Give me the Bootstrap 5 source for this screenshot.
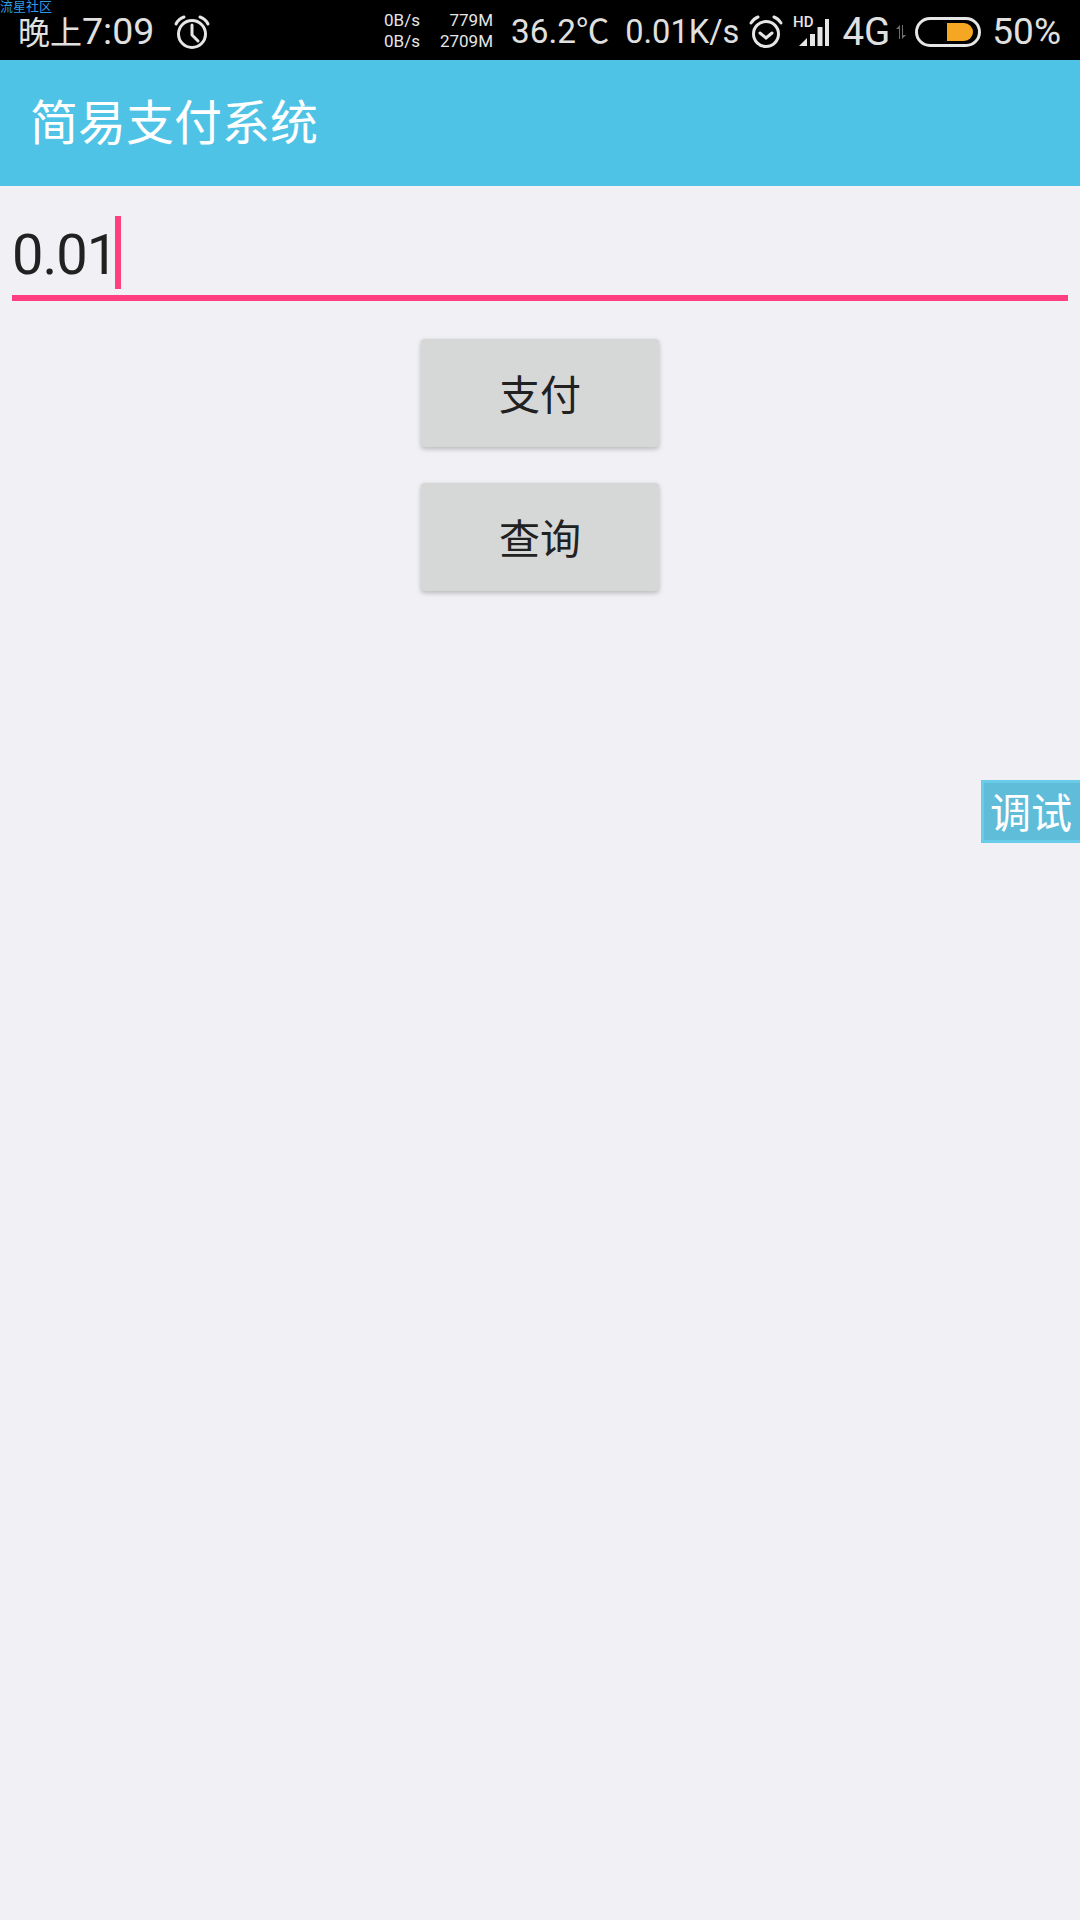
<!DOCTYPE html>
<html lang="zh">
<head>
<meta charset="utf-8">
<title>简易支付系统</title>
<link href="https://cdn.jsdelivr.net/npm/bootstrap@5.3.0/dist/css/bootstrap.min.css" rel="stylesheet">
<style>
html,body{height:1920px;width:1080px;overflow:hidden}
body{background:#f0f0f5;font-family:Roboto,"Noto Sans CJK SC",sans-serif;position:relative}
.sbar{height:60px;background:#000;color:#e0e0e0;padding:3px 19px 0 18px;position:relative}
.wm{position:absolute;left:0;top:0;font-size:13px;line-height:13px;color:#2f9be8}
.stime{margin-right:19px;font-size:37.500px;line-height:36px;display:flex;align-items:baseline}
.stime b{font-size:32px;font-weight:400}
.net{font-size:17px;line-height:21px;color:#e6e6e6;display:grid;grid-template-columns:auto 73px;text-align:right;margin-right:18px;margin-top:-1px}
.stxt{font-size:34px;line-height:40px}
.s-temp{font-size:33.300px;margin-right:16px}
.s-speed{font-size:32.600px;margin-right:10px}
.s-alarm{margin-right:10px}
.s-four{font-size:38.500px;margin-left:13px}
.s-arrows{margin-left:5px;margin-right:8px}
.s-pct{font-size:37px;margin-left:11px}
.tbar{height:126px;background:#4fc3e6;color:#fff;font-size:48px;line-height:128px;padding-left:30px}
.amount{margin:30px 12px 0;height:85px;border-bottom:6px solid #ff3f80;position:relative;font-size:56px;line-height:66px;color:#212121;padding-top:6px;letter-spacing:-1px}
.caret-bar{display:inline-block;width:6px;height:73px;background:#ff3f80;position:absolute;left:103px;top:0}
.pay-stack{margin-top:38px;gap:36px}
.pay{width:238px;height:108px;background:#d6d7d7;color:#212121;font-size:41px;border:0;border-radius:4px;box-shadow:0 2px 5px rgba(0,0,0,.24);display:flex;align-items:center;justify-content:center;padding:8px 0 0}
.pay:hover{background:#d6d7d7;color:#212121}
.debug{position:absolute;right:0;top:780px;width:99px;height:63px;background:#5fbdd9;border:3px solid #69cdea;border-right:0;color:#fff;font-size:41px;line-height:62px;padding-left:6px}
</style>
</head>
<body>
<div class="sbar d-flex justify-content-between align-items-center">
  <div class="wm">流星社区</div>
  <div class="d-flex align-items-center">
    <span class="stime"><b>晚上</b>7:09</span>
    <svg width="38" height="34" viewBox="0 0 38 34" fill="none" stroke="#e6e6e6" stroke-width="3"><circle cx="19" cy="19" r="13.5"/><path d="M19 10v10l6 6M3 9c2-4 5-6 8-7M35 9c-2-4-5-6-8-7" stroke-linecap="round"/></svg>
  </div>
  <div class="d-flex align-items-center">
    <div class="net"><span>0B/s</span><span>779M</span><span>0B/s</span><span>2709M</span></div>
    <span class="stxt s-temp">36.2℃</span>
    <span class="stxt s-speed">0.01K/s</span>
    <svg class="s-alarm" width="34" height="34" viewBox="0 0 34 34" fill="none" stroke="#e6e6e6" stroke-width="3"><circle cx="17" cy="19" r="12.5"/><path d="M11 18l6 5 6-5M2 8c2-3 4-5 7-6M32 8c-2-3-4-5-7-6" stroke-linecap="round"/></svg>
    <svg width="36" height="32" viewBox="0 0 36 32"><text x="0" y="11" font-family="Roboto,sans-serif" font-size="15" font-weight="500" fill="#e6e6e6">HD</text><path d="M6 30l8-8v8zM17 18h5v12h-5zM24.500 11h5v19h-5zM32 3h4v27h-4z" fill="#e6e6e6"/></svg>
    <span class="stxt s-four">4G</span>
    <svg class="s-arrows" width="12" height="14" viewBox="0 0 12 14" fill="#6e6e6e"><path d="M4 14V4H1l4-4v14zM8 0v10h3l-4 4V0z"/></svg>
    <svg width="66" height="30" viewBox="0 0 66 30"><rect x="1.500" y="1.500" width="63" height="27" rx="13.500" fill="none" stroke="#e6e6e6" stroke-width="3"/><path d="M32 6h17a9 9 0 0 1 0 18H32z" fill="#f5a623"/></svg>
    <span class="stxt s-pct">50%</span>
  </div>
</div>
<div class="tbar">简易支付系统</div>
<div class="amount">0.01<span class="caret-bar"></span></div>
<div class="d-flex flex-column align-items-center pay-stack">
  <button type="button" class="btn pay">支付</button>
  <button type="button" class="btn pay">查询</button>
</div>
<div class="debug">调试</div>
</body>
</html>
